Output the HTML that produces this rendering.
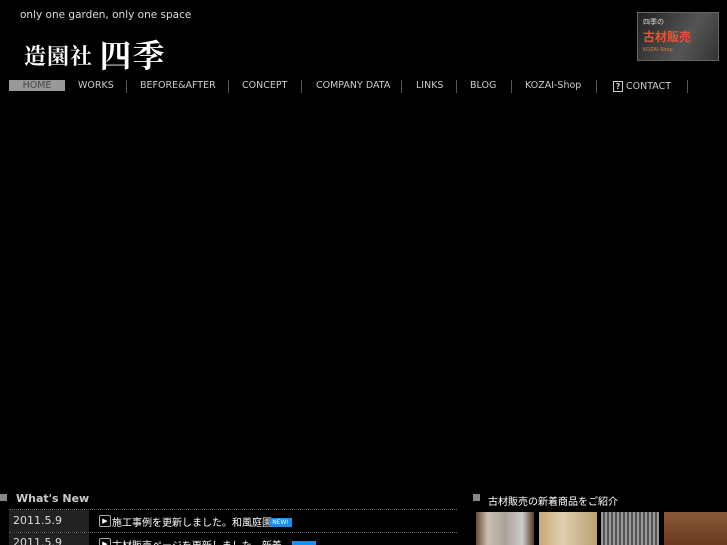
<!DOCTYPE html>
<html><head><meta charset="utf-8"><style>
html,body{margin:0;background:#000;width:727px;height:545px;overflow:hidden}
body{position:relative;font-family:"DejaVu Sans","Liberation Sans",sans-serif;color:#ddd}
.a{position:absolute}
.nav{top:80px;left:9px;height:13px;font-size:9.5px;color:#ccc}
.nav span{position:absolute;top:0;white-space:nowrap}
.sep{position:absolute;top:0;width:1px;height:13px;background:#555}
.thumb{position:absolute;top:512px;height:33px;width:58px}
.jp{font-family:'Noto Sans CJK JP',sans-serif;white-space:nowrap}
</style></head><body>
<div class="a" style="left:20px;top:9px;font-size:10.5px;color:#ddd">only one garden, only one space</div>
<div class="a" style="left:24px;top:28px;font-size:22px;color:#fff;font-family:'Noto Serif CJK SC','WenQuanYi Zen Hei',serif;font-weight:bold;letter-spacing:1px">造園社 <span style="font-size:32px;position:relative;top:3px">四季</span></div>
<div class="a" style="left:637px;top:12px;width:80px;height:47px;background:linear-gradient(120deg,#222,#555 60%,#333);border:1px solid #666">
 <div class="a jp" style="left:5px;top:4px;font-size:7px;color:#ddd">四季の</div>
 <div class="a jp" style="left:5px;top:15px;font-size:12px;color:#e55533;font-weight:bold">古材販売</div>
 <div class="a" style="left:5px;top:34px;font-size:5px;color:#c84">KOZAI-Shop</div>
</div>
<div class="a nav" style="width:720px">
 <span style="left:0;width:56px;height:11px;background:#999;color:#444;text-align:center;top:0">HOME</span>
 <span style="left:69px">WORKS</span><div class="sep" style="left:117px"></div>
 <span style="left:131px">BEFORE&amp;AFTER</span><div class="sep" style="left:219px"></div>
 <span style="left:233px">CONCEPT</span><div class="sep" style="left:292px"></div>
 <span style="left:307px">COMPANY DATA</span><div class="sep" style="left:392px"></div>
 <span style="left:407px">LINKS</span><div class="sep" style="left:447px"></div>
 <span style="left:461px">BLOG</span><div class="sep" style="left:502px"></div>
 <span style="left:516px">KOZAI-Shop</span><div class="sep" style="left:587px"></div>
 <span style="left:604px;top:1px"><b style="display:inline-block;border:1px solid #ccc;width:8px;height:9px;font-size:8px;text-align:center;line-height:9px">?</b> CONTACT</span><div class="sep" style="left:678px"></div>
</div>
<div class="a" style="left:0;top:494px;width:7px;height:7px;background:#888"></div>
<div class="a" style="left:16px;top:492px;font-size:11px;font-weight:bold;color:#ccc">What's New</div>
<div class="a" style="left:9px;top:509px;width:448px;border-top:1px dotted #666"></div>
<div class="a" style="left:9px;top:510px;width:80px;height:22px;background:#222"></div>
<div class="a" style="left:13px;top:514px;font-size:11px;color:#ddd">2011.5.9</div>
<div class="a" style="left:9px;top:532px;width:448px;border-top:1px dotted #666"></div>
<div class="a" style="left:9px;top:533px;width:80px;height:12px;background:#222"></div>
<div class="a" style="left:13px;top:536px;font-size:11px;color:#ddd">2011.5.9</div>
<div class="a" style="left:99px;top:515px;width:10px;height:10px;border:1px solid #aaa;border-radius:2px;font-size:7px;line-height:10px;text-align:center;color:#fff">▶</div>
<div class="a jp" style="left:112px;top:514px;font-size:10px;color:#fff">施工事例を更新しました。和風庭園</div>
<div class="a" style="left:269px;top:518px;width:23px;height:9px;background:#1a8ee8;font-size:6px;color:#fff;text-align:center;line-height:9px">NEW!</div>
<div class="a" style="left:99px;top:538px;width:10px;height:10px;border:1px solid #aaa;border-radius:2px;font-size:7px;line-height:10px;text-align:center;color:#fff">▶</div>
<div class="a jp" style="left:112px;top:537px;font-size:10px;color:#fff">古材販売ページを更新しました。新着</div>
<div class="a" style="left:292px;top:541px;width:24px;height:4px;background:#1a8ee8"></div>
<div class="a" style="left:473px;top:494px;width:7px;height:7px;background:#888"></div>
<div class="a jp" style="left:488px;top:493px;font-size:10px;color:#fff">古材販売の新着商品をご紹介</div>
<div class="thumb" style="left:476px;background:linear-gradient(90deg,#6a4a35,#c8c0b0 20%,#a9a39a 50%,#ccc 80%,#5a3a25)"></div>
<div class="thumb" style="left:539px;background:linear-gradient(90deg,#c8a878,#e0d0b0 40%,#b8a070);"></div>
<div class="thumb" style="left:601px;background:repeating-linear-gradient(90deg,#999 0 2px,#555 2px 4px)"></div>
<div class="thumb" style="left:664px;width:63px;background:linear-gradient(#8a5a3a,#6a3a20)"></div>
</body></html>
